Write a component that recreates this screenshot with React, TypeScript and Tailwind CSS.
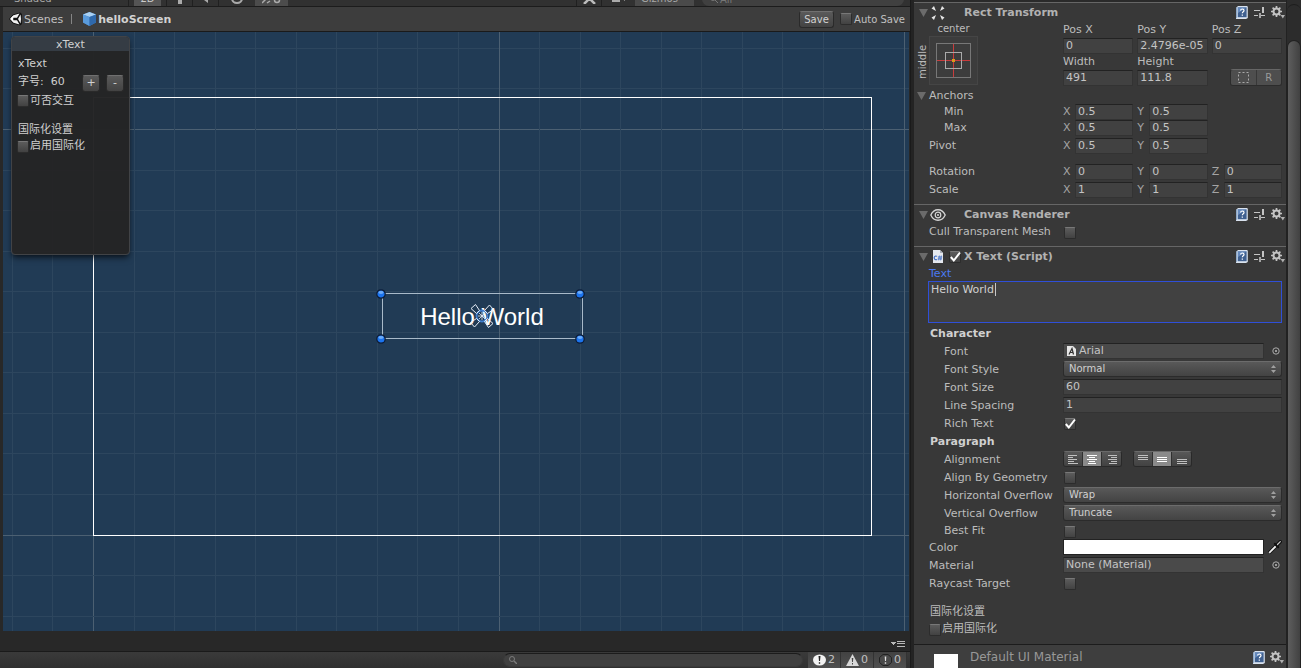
import React, { useId } from "react";
import clsx from "clsx";

const btn =
  "border border-[#2a2a2a] border-t-[#707070] bg-linear-to-b from-[#5a5a5a] to-[#434343] text-[#d2d2d2]";

/* ---------- icons ---------- */

function UnityIcon() {
  return (
    <svg width="14" height="14" viewBox="0 0 14 14">
      <path d="M0 7 4 2.5 11 .5 13 2 12.5 7l.5 5-2 1.5-7-2z" fill="#111" />
      <path d="M1 7 4.5 3.2 10.5 1.6 8 5.8H3.2zM3.2 8.2H8l2.5 4.2-6-1.6zM11.6 2.4 12 7l-.4 4.6L9 7z" fill="#f2f2f2" />
      <path d="M1 7 4.6 3.2 4.2 7l.4 3.8z" fill="#fff" />
    </svg>
  );
}

function CubeIcon() {
  return (
    <svg width="13" height="14" viewBox="0 0 13 14">
      <path d="M6.5 0 13 2.5v8L6.5 14 0 10.5v-8z" fill="#3f7fc4" />
      <path d="M6.5 0 13 2.5 6.5 5 0 2.5z" fill="#a9d0f2" />
      <path d="M0 2.5 6.5 5v9L0 10.5z" fill="#5a9bdc" />
      <path d="M13 2.5 6.5 5v9l6.5-3.5z" fill="#2f69ac" />
    </svg>
  );
}

function BookIcon() {
  return (
    <svg width="13" height="13" viewBox="0 0 13 13">
      <path d="M1 2 3 0h9l.8.8V12L11 13H1z" fill="#d9e2ee" />
      <path d="M1 2 2.6.6V11L1 12.6z" fill="#8fa9c8" />
      <path d="M3 1.4h8.6v9.8H3z" fill="#3f6090" />
      <path d="M3 1.4h8.6L3 7z" fill="#6489bd" />
      <path d="M5.6 4.6c0-2.2 3.6-2 3.4 0-.1 1.2-1.6 1.2-1.7 2.7M7.3 8.6v1.2" stroke="#fff" strokeWidth="1.2" fill="none" />
    </svg>
  );
}

function PresetIcon() {
  return (
    <svg width="11" height="12" viewBox="0 0 11 12" shapeRendering="crispEdges" fill="#c4c4c4">
      <path d="M0 3h6v1H0zM0 8h4v1H0zM7 8h4v1H7z" />
      <path d="M8 0h2v6H8z" />
      <path d="M5 6h2v5H5z" fill="#a4a4a4" />
    </svg>
  );
}

function GearIcon() {
  return (
    <svg width="14" height="13" viewBox="0 0 14 13">
      <circle cx="5.5" cy="5.5" r="3" fill="none" stroke="#c4c4c4" strokeWidth="2" />
      <path
        d="M5.5 0v2M5.5 9v2M0 5.5h2M9 5.5h2M1.6 1.6 3 3M8 8l1.4 1.4M1.6 9.4 3 8M8 3l1.4-1.4"
        stroke="#c4c4c4"
        strokeWidth="1.7"
      />
      <path d="M9.6 9H14l-2.2 3.4z" fill="#b0b0b0" />
    </svg>
  );
}

function Foldout() {
  return (
    <svg width="9" height="8" viewBox="0 0 9 8">
      <path d="M0 0h9L4.5 8z" fill="#6b6b6b" />
    </svg>
  );
}

function RectTransformIcon() {
  return (
    <svg width="16" height="14" viewBox="0 0 16 14" fill="#e6e6e6">
      <path d="M1.5 2.5 4 0 6 5zM14.500 2.5 12 0 10 5zM1.5 11.5 4 14 6 9zM14.500 11.5 12 14 10 9z" />
    </svg>
  );
}

function EyeIcon() {
  return (
    <svg width="16" height="12" viewBox="0 0 16 12" fill="none" stroke="#d6d6d6">
      <path d="M.8 6C4-1 12-1 15.2 6 12 13 4 13 .8 6z" strokeWidth="1.3" />
      <circle cx="8" cy="6" r="2.8" strokeWidth="1.2" />
      <circle cx="8" cy="6" r="1" fill="#d6d6d6" stroke="none" />
    </svg>
  );
}

function ScriptIcon() {
  return (
    <svg width="10" height="13" viewBox="0 0 10 13">
      <path d="M0 0h7l3 3v10H0z" fill="#e4e8ee" />
      <path d="M7 0v3h3z" fill="#a9afba" />
      <path d="M4 6.4a1.700 1.900 0 1 0 0 2.900" stroke="#3a68c0" strokeWidth="1.1" fill="none" />
      <path d="M4.900 7h4.300M4.700 8.900h4.300M6.400 5.600 5.700 10.300M8.300 5.600 7.600 10.300" stroke="#3a68c0" strokeWidth=".8" fill="none" />
    </svg>
  );
}

function PickerDot() {
  return (
    <svg width="8" height="8" viewBox="0 0 8 8">
      <circle cx="4" cy="4" r="3.2" fill="none" stroke="#aaa" />
      <circle cx="4" cy="4" r="1" fill="#bbb" />
    </svg>
  );
}

function Dropper() {
  return (
    <svg width="14" height="14" viewBox="0 0 14 14">
      <path d="M1 13 8.500 5.500" stroke="#111" strokeWidth="3.400" />
      <path d="M1.200 12.800 8.500 5.500" stroke="#f0f0f0" strokeWidth="1.800" />
      <path d="M6.800 3.800 10.200 7.200" stroke="#111" strokeWidth="2" strokeLinecap="round" />
      <path d="M9 5 12.200 1.800" stroke="#111" strokeWidth="3.600" strokeLinecap="round" />
      <path d="M9.500 4.500 12.300 1.700" stroke="#c8c8c8" strokeWidth="1.200" strokeLinecap="round" />
    </svg>
  );
}

type Lines = [number, number, number][];
const alignIcons: Record<string, Lines> = {
  Left: [[0, 9, 1], [0, 5, 3], [0, 9, 5], [0, 6, 7], [0, 10, 9]],
  Center: [[0, 10, 1], [2, 6, 3], [0, 10, 5], [2, 6, 7], [1, 8, 9]],
  Right: [[1, 9, 1], [4, 6, 3], [1, 9, 5], [4, 6, 7], [2, 8, 9]],
  Top: [[0, 10, 1], [0, 10, 3], [0, 10, 5]],
  Middle: [[0, 10, 3], [0, 10, 5], [0, 10, 7]],
  Bottom: [[0, 10, 5], [0, 10, 7], [0, 10, 9]],
};

function AlignGroup({ names, active }: { names: string[]; active: string }) {
  return (
    <div className="flex h-4 overflow-hidden rounded-[3px] border border-[#292929] border-t-[#6a6a6a]">
      {names.map((n) => (
        <button
          key={n}
          aria-label={n}
          className={clsx(
            "flex w-[19px] items-center justify-center border-r border-[#303030] last:border-r-0",
            n === active ? "bg-[#8a8a8a] text-white" : "bg-linear-to-b from-[#585858] to-[#424242] text-[#c0c0c0]",
          )}
        >
          <svg width="10" height="10" viewBox="0 0 10 10" fill="currentColor" shapeRendering="crispEdges">
            {alignIcons[n].map(([x, w, y]) => (
              <rect key={y} x={x} y={y} width={w} height="1" />
            ))}
          </svg>
        </button>
      ))}
    </div>
  );
}

/* ---------- controls ---------- */

function Check({ id, label, checked }: { id?: string; label?: string; checked?: boolean }) {
  return (
    <span className="relative flex size-3 shrink-0">
      <input
        id={id}
        type="checkbox"
        aria-label={label}
        defaultChecked={checked}
        className="peer size-3 appearance-none rounded-[2px] border border-[#2c2c2c] border-t-[#787878] bg-linear-to-b from-[#5c5c5c] to-[#424242]"
      />
      <svg className="pointer-events-none absolute inset-0 hidden peer-checked:block" width="12" height="12" viewBox="0 0 12 12">
        <path d="M1.8 6 4.8 9.5 11 1.5" fill="none" stroke="#fff" strokeWidth="2" />
      </svg>
    </span>
  );
}

function Field({ id, label, value }: { id?: string; label?: string; value: string }) {
  return (
    <input
      id={id}
      aria-label={label}
      defaultValue={value}
      className="block h-4 w-full min-w-0 border border-[#333] border-t-[#222] bg-[#414141] px-[2px] text-[11px] text-[#c4c4c4] outline-none"
    />
  );
}

function Row({
  label,
  indent,
  className,
  children,
}: {
  label: string;
  indent?: boolean;
  className?: string;
  children: (id: string) => React.ReactNode;
}) {
  const id = useId();
  return (
    <div className={clsx("flex items-center", className ?? "h-[18px]")}>
      <label htmlFor={id} className={clsx("w-[134px] shrink-0 whitespace-nowrap", indent && "pl-[15px]")}>
        {label}
      </label>
      <div className="flex h-4 min-w-0 flex-1 items-center self-start">{children(id)}</div>
    </div>
  );
}

function CheckRow({ label, indent, className, checked }: { label: string; indent?: boolean; className?: string; checked?: boolean }) {
  return (
    <Row label={label} indent={indent} className={className}>
      {(id) => (
        <span className="mt-[2px] ml-px">
          <Check id={id} checked={checked} />
        </span>
      )}
    </Row>
  );
}

function AxisRow({ label, indent, className, values }: { label: string; indent?: boolean; className: string; values: string[] }) {
  return (
    <div className={clsx("flex items-center", className)}>
      <span className={clsx("w-[134px] shrink-0", indent && "pl-[15px]")}>{label}</span>
      <div className="grid flex-1 grid-cols-3 gap-1">
        {values.map((v, i) => (
          <label key={i} className="flex items-center">
            <span className="w-3 shrink-0 text-[#a4a4a4]">{"XYZ"[i]}</span>
            <Field label={`${label} ${"XYZ"[i]}`} value={v} />
          </label>
        ))}
      </div>
    </div>
  );
}

function Dropdown({ id, value, options }: { id: string; value: string; options: string[] }) {
  return (
    <div className="relative flex-1">
      <select
        id={id}
        defaultValue={value}
        className="block h-4 w-full appearance-none rounded-[3px] border border-[#2b2b2b] border-t-[#6c6c6c] bg-linear-to-b from-[#595959] to-[#434343] px-[5px] text-[10px] leading-3 text-[#d0d0d0]"
      >
        {options.map((o) => (
          <option key={o}>{o}</option>
        ))}
      </select>
      <svg className="pointer-events-none absolute top-1 right-[6px]" width="5" height="8" viewBox="0 0 5 8" fill="#a0a0a0">
        <path d="M0 3 2.5 0 5 3zM0 5h5L2.5 8z" />
      </svg>
    </div>
  );
}

function Header({ icon, title, check }: { icon: React.ReactNode; title: string; check?: boolean }) {
  return (
    <div className="flex h-5 items-center border-t border-[#666] pl-[5px]">
      <Foldout />
      <span className="flex w-5 justify-center">{icon}</span>
      <span className="flex w-4 pl-px">{check && <Check label={`Enable ${title}`} checked />}</span>
      <h2 className="flex-1 pt-[2px] text-[11px] font-bold text-[#b2b2b2]">{title}</h2>
      <div className="flex items-center gap-[6px] pr-px">
        <button aria-label="Help"><BookIcon /></button>
        <button aria-label="Presets"><PresetIcon /></button>
        <button aria-label="Settings"><GearIcon /></button>
      </div>
    </div>
  );
}

/* ---------- scene ---------- */

const steps = Array.from({ length: 60 }, (_, i) => i - 2);

function SceneDrawing() {
  return (
    <svg className="absolute inset-0 size-full" shapeRendering="crispEdges">
      {steps.map((k) => {
        const strong = k % 10 === 0;
        const x = 90.5 + Math.round(k * 40.55);
        const y = 97.5 + Math.round(k * 40.55);
        const color = strong ? "#4c6072" : "#2d465e";
        return (
          <g key={k} stroke={color}>
            <line x1={x} x2={x} y1="0" y2="3000" />
            <line x1="0" x2="3000" y1={y} y2={y} />
          </g>
        );
      })}
      <rect x="90.5" y="65.5" width="778" height="438" fill="none" stroke="#fff" />
      <rect x="379.5" y="261.5" width="200" height="45" fill="none" stroke="#a9bac9" />
    </svg>
  );
}

function SelectionGizmo() {
  return (
    <svg className="absolute top-[256px] left-[372px]" width="214" height="56" viewBox="0 0 214 56">
      <g transform="translate(107 28)" fill="none" stroke="#e6eef8">
        <circle r="5.5" stroke="#3f7dcc" strokeWidth="1.8" />
        {[0, 90, 180, 270].map((a) => (
          <path key={a} transform={`rotate(${a})`} d="M2.500 5.500 6.500 11.500 11 7.500 5.500 2.500z" strokeWidth="1" />
        ))}
        <path d="M-4 0H4M0-4V4M-3-3l6 6M3-3l-6 6" strokeWidth=".8" />
      </g>
      {[[6, 6], [205, 6], [6, 51], [205, 51]].map(([x, y]) => (
        <g key={`${x}-${y}`}>
          <circle cx={x} cy={y} r="4.2" fill="#1c74ee" stroke="#0d1b33" strokeWidth="1.2" />
          <ellipse cx={x} cy={y - 1.5} rx="2.6" ry="1.4" fill="#6aaaf8" />
        </g>
      ))}
    </svg>
  );
}

function XTextPanel() {
  return (
    <section className="absolute top-1 left-2 h-[219px] w-[119px] rounded-[4px] border border-[#414346] bg-[#252526]/98 text-[#d0d0d0] shadow-md shadow-black/50">
      <h3 className="h-[14px] rounded-t-[3px] bg-[#353c44] text-center leading-[15px]">xText</h3>
      <div className="px-[6px] pt-[4px]">
        <p className="h-[18px] leading-[18px]">xText</p>
        <div className="flex h-[17px] items-center">
          <span className="flex-1 leading-4">字号:&nbsp; 60</span>
          <button className={clsx(btn, "mt-[3px] h-[17px] w-[18px] rounded-[3px] leading-[14px]")}>+</button>
          <button className={clsx(btn, "mt-[3px] ml-[6px] -mr-px h-[17px] w-[18px] rounded-[3px] leading-[14px]")}>-</button>
        </div>
        <label className="-ml-px flex h-[22px] items-center gap-px"><Check />可否交互</label>
        <p className="mt-[9px] h-[17px] leading-[17px]">国际化设置</p>
        <label className="-ml-px flex h-[17px] items-center gap-px"><Check />启用国际化</label>
      </div>
    </section>
  );
}

function TopStrip() {
  return (
    <div className="flex h-[7px] shrink-0 items-end overflow-hidden border-b border-[#1c1c1c] bg-[#313131] pl-[3px] text-[10px] text-[#a8a8a8]">
      <div className="flex h-4 w-[126px] items-center border-r border-[#202020] pl-[11px]">Shaded</div>
      <div className="ml-[5px] flex h-4 w-[27px] items-center justify-center bg-[#555] text-[#ccc]">2D</div>
      <div className="ml-[5px] flex h-4 w-[27px] items-center justify-center border-x border-[#202020]">
        <svg width="8" height="12" viewBox="0 0 8 12" fill="#aaa"><circle cx="4" cy="4" r="4" /><path d="M2 8h4v4H2z" /></svg>
      </div>
      <div className="flex h-4 w-[26px] items-center justify-center border-r border-[#202020]">
        <svg width="10" height="10" viewBox="0 0 10 10" fill="#aaa"><path d="M0 3h3l4-3v10L3 7H0z" /></svg>
      </div>
      <div className="flex h-4 w-[36px] items-center justify-center">
        <svg width="14" height="11" viewBox="0 0 14 11" fill="none" stroke="#aaa" strokeWidth="2"><ellipse cx="7" cy="5.5" rx="5" ry="4.5" /></svg>
      </div>
      <div className="flex h-4 w-[33px] items-center justify-center bg-[#4c4c4c]">
        <svg width="20" height="11" viewBox="0 0 20 11" fill="none" stroke="#aaa" strokeWidth="1.5"><path d="M0 10 9 1M5 10l3-2" /><circle cx="15" cy="7" r="2.5" /></svg>
      </div>
      <div className="flex-1" />
      <div className="flex h-4 w-[26px] items-center justify-center border-x border-[#202020]">
        <svg width="13" height="12" viewBox="0 0 13 12" stroke="#bbb" strokeWidth="2.5"><path d="M1 1l11 11M12 1 1 12" /></svg>
      </div>
      <div className="flex h-4 w-[33px] items-center justify-center">
        <svg width="13" height="8" viewBox="0 0 13 8" fill="#aaa"><path d="M0 0h8v8H0zM9 4l4-3v6z" /></svg>
      </div>
      <div className="flex h-4 w-[59px] items-center bg-[#4a4a4a] pl-[6px]">Gizmos</div>
      <div className="mr-[6px] ml-2 flex h-[14px] w-[202px] items-center gap-px self-end rounded-full bg-[#404040] pl-2 text-[#777]">
        <svg width="9" height="8" viewBox="0 0 9 8" fill="none" stroke="#777"><circle cx="3" cy="3" r="2.5" /><path d="m5 5 3 3" /></svg>
        All
      </div>
    </div>
  );
}

function StatusBadge({ count, children }: { count: number; children: React.ReactNode }) {
  return (
    <button className="flex h-4 w-[33px] items-center gap-[2px] border-r border-[#333] bg-linear-to-b from-[#424242] to-[#505050] pl-[5px] text-[11px] text-[#c0c0c0]">
      {children}
      {count}
    </button>
  );
}

function SceneView() {
  return (
    <main className="flex min-w-0 flex-1 flex-col border-r border-[#1a1a1a] bg-[#282828]">
      <TopStrip />
      <div className="ml-[3px] flex h-[25px] shrink-0 items-center border-b border-[#1a1a1a] bg-[#3d3d3d] pl-[6px] text-[#c0c0c0]">
        <UnityIcon />
        <a href="#scenes" className="ml-px pt-[2px]">Scenes</a>
        <span className="ml-[8px] h-[10px] w-px bg-[#858585]" />
        <span className="ml-[11px]"><CubeIcon /></span>
        <b className="ml-[2px] flex-1 pt-[2px] text-[#d2d2d2]">helloScreen</b>
        <button className={clsx(btn, "h-[17px] w-[35px] rounded-[3px] text-[10px]")}>Save</button>
        <label className="mr-[5px] ml-[6px] flex items-center gap-[2px] text-[10px]"><Check />Auto Save</label>
      </div>
      <div className="relative mr-px ml-[3px] min-h-0 flex-1 overflow-hidden bg-[#213b55]">
        <SceneDrawing />
        <div className="absolute top-[263px] left-[379px] flex h-[44px] w-[200px] items-center justify-center font-['Liberation_Sans',sans-serif] text-2xl text-white">
          Hello World
        </div>
        <SelectionGizmo />
        <XTextPanel />
      </div>
      <div className="flex h-[21px] shrink-0 items-center justify-end border-b border-[#1a1a1a] pt-[5px] pr-[5px]">
        <button aria-label="Panel menu">
          <svg width="14" height="6" viewBox="0 0 14 6" fill="#b8b8b8" shapeRendering="crispEdges"><path d="M0 1h5L2.5 4zM6 0h8v1H6zM6 2h8v1H6zM6 5h8v1H6z" /></svg>
        </button>
      </div>
      <div className="flex h-4 shrink-0 items-center bg-linear-to-b from-[#3a3a3a] to-[#303030] pr-[3px]">
        <div className="flex-1" />
        <label className="mr-[5px] flex h-[14px] w-[300px] items-center rounded-full border border-[#3a3a3a] border-t-[#1c1c1c] bg-[#404040] pl-[5px]">
          <svg width="8" height="8" viewBox="0 0 8 8" fill="none" stroke="#7c7c7c"><circle cx="3" cy="3" r="2.5" /><path d="m5 5 3 3" strokeWidth="1.4" /></svg>
          <input aria-label="Search console" className="min-w-0 flex-1 bg-transparent outline-none" />
        </label>
        <StatusBadge count={2}>
          <svg width="13" height="12" viewBox="0 0 13 12"><ellipse cx="6.5" cy="6" rx="6.5" ry="5.5" fill="#f2f2f2" /><path d="M5.5 2h2L7 7H6zM5.8 8.2h1.4v1.5H5.8z" fill="#222" /></svg>
        </StatusBadge>
        <StatusBadge count={0}>
          <svg width="13" height="12" viewBox="0 0 13 12"><path d="M6.5 0 13 12H0z" fill="#d8d8d8" /><path d="M5.7 4h1.6l-.4 4h-.8zM6 9h1v1.4H6z" fill="#444" /></svg>
        </StatusBadge>
        <StatusBadge count={0}>
          <svg width="13" height="12" viewBox="0 0 13 12"><path d="M4 .5h5l3.5 3v5l-3.5 3H4l-3.5-3v-5z" fill="#4a4a4a" stroke="#222" /><path d="M5.7 2.500h1.6L7 7H6zM5.8 8.300h1.4v1.4H5.8z" fill="#e0e0e0" /></svg>
        </StatusBadge>
      </div>
    </main>
  );
}

/* ---------- inspector ---------- */

function RectTransform() {
  return (
    <section className="pb-[6px]">
      <Header icon={<RectTransformIcon />} title="Rect Transform" />
      <div className="flex h-16 pr-[4px]">
        <div className="flex w-[149px] shrink-0 pl-[3px]">
          <span className="mt-4 flex h-[48px] w-[12px] rotate-180 items-center justify-center text-[10px] leading-3 [writing-mode:vertical-rl]">middle</span>
          <div className="w-[49px]">
            <p className="h-[14px] text-center text-[10px] leading-[14px]">center</p>
            <button aria-label="Anchor presets" className="flex size-[49px] items-center justify-center border border-[#454545] bg-[#3c3c3c]">
              <svg width="35" height="35" viewBox="0 0 35 35" fill="none" shapeRendering="crispEdges">
                <rect x=".5" y=".5" width="34" height="34" stroke="#777" />
                <path d="M17.5 1v33M1 17.5h33" stroke="#c83c3c" />
                <rect x="9.5" y="9.5" width="16" height="16" stroke="#aaa" />
                <rect x="16" y="16" width="3" height="3" fill="#d79b1c" />
              </svg>
            </button>
          </div>
        </div>
        <div className="grid flex-1 grid-cols-3 gap-x-1">
          <label className="leading-4">Pos X<Field value="0" /></label>
          <label className="leading-4">Pos Y<Field value="2.4796e-05" /></label>
          <label className="leading-4">Pos Z<Field value="0" /></label>
          <label className="leading-4">Width<Field value="491" /></label>
          <label className="leading-4">Height<Field value="111.8" /></label>
          <div className="flex items-end justify-end">
            <div className="flex h-[17px] w-[52px] overflow-hidden rounded-[3px] border border-[#2c2c2c] border-t-[#666] text-[10px] text-[#9a9a9a]">
              <button aria-label="Blueprint mode" className="flex flex-1 items-center justify-center border-r border-[#383838] bg-[#4e4e4e]">
                <svg width="11" height="11" viewBox="0 0 11 11"><rect x=".5" y=".5" width="10" height="10" fill="none" stroke="#aaa" strokeDasharray="2 2" /></svg>
              </button>
              <button className="flex-1 bg-[#4e4e4e]">R</button>
            </div>
          </div>
        </div>
      </div>
      <div className="pr-[4px] pl-[15px]">
        <div className="relative mt-[2px] h-4 leading-4">
          <span className="absolute top-1 -left-3"><Foldout /></span>
          Anchors
        </div>
        <AxisRow label="Min" indent className="h-4" values={["0.5", "0.5"]} />
        <AxisRow label="Max" indent className="h-4" values={["0.5", "0.5"]} />
        <AxisRow label="Pivot" className="mt-[2px] h-4" values={["0.5", "0.5"]} />
        <AxisRow label="Rotation" className="mt-[10px] h-4" values={["0", "0", "0"]} />
        <AxisRow label="Scale" className="mt-[2px] h-4" values={["1", "1", "1"]} />
      </div>
    </section>
  );
}

function ObjectField({ id, value, icon }: { id: string; value: string; icon?: boolean }) {
  return (
    <>
      <div className="flex h-4 flex-1 items-center border border-[#333] border-t-[#222] bg-[#4a4a4a] px-[2px]">
        {icon && (
          <svg className="mr-[3px] ml-px" width="9" height="10" viewBox="0 0 9 10"><path d="M0 0h6l3 3v7H0z" fill="#e6e6e6" /><path d="M2 8.5 5 2.5l1.5 6M3 6.5h3" fill="none" stroke="#333" strokeWidth="1.2" /></svg>
        )}
        <input id={id} defaultValue={value} className="min-w-0 flex-1 bg-transparent text-[11px] text-[#c4c4c4] outline-none" />
      </div>
      <button aria-label={`Pick ${value}`} className="flex w-[18px] justify-center pl-[5px]"><PickerDot /></button>
    </>
  );
}

function Inspector() {
  return (
    <aside className="flex w-[387px] shrink-0 bg-[#383838]">
      <div className="min-w-0 flex-1 overflow-hidden border-r border-[#222]">
        <div className="h-[2px] bg-[#2a2a2a]" />
        <RectTransform />
        <section className="pb-[6px]">
          <Header icon={<EyeIcon />} title="Canvas Renderer" />
          <div className="pl-[15px]">
            <CheckRow label="Cull Transparent Mesh" className="h-4" />
          </div>
        </section>
        <section>
          <Header icon={<ScriptIcon />} title="X Text (Script)" check />
          <div className="pr-[4px] pl-[15px]">
            <label htmlFor="text-value" className="block h-[15px] leading-4 text-[#4a78f0]">Text</label>
            <div className="relative -ml-px">
              <textarea
                id="text-value"
                defaultValue="Hello World"
                className="block h-[42px] w-full resize-none border border-[#2f4fd8] bg-[#414141] px-[2px] text-[11px] leading-4 text-[#d0d0d0] outline-none"
              />
              <span className="pointer-events-none absolute top-[2px] left-[67px] h-[13px] w-px bg-[#c8c8c8]" />
            </div>
            <h3 className="mt-[2px] h-[18px] pl-px leading-[18px] font-bold text-[#d0d0d0]">Character</h3>
            <Row indent label="Font">{(id) => <ObjectField id={id} value="Arial" icon />}</Row>
            <Row indent label="Font Style">{(id) => <Dropdown id={id} value="Normal" options={["Normal", "Bold", "Italic"]} />}</Row>
            <Row indent label="Font Size">{(id) => <Field id={id} value="60" />}</Row>
            <Row indent label="Line Spacing">{(id) => <Field id={id} value="1" />}</Row>
            <CheckRow indent label="Rich Text" checked />
            <h3 className="h-[18px] pl-px leading-[18px] font-bold text-[#d0d0d0]">Paragraph</h3>
            <div className="flex h-[18px] items-start">
              <span className="w-[134px] shrink-0 pl-[15px] leading-[18px]">Alignment</span>
              <AlignGroup names={["Left", "Center", "Right"]} active="Center" />
              <span className="w-[11px]" />
              <AlignGroup names={["Top", "Middle", "Bottom"]} active="Middle" />
            </div>
            <CheckRow indent label="Align By Geometry" />
            <Row indent label="Horizontal Overflow">{(id) => <Dropdown id={id} value="Wrap" options={["Wrap", "Overflow"]} />}</Row>
            <Row indent label="Vertical Overflow">{(id) => <Dropdown id={id} value="Truncate" options={["Truncate", "Overflow"]} />}</Row>
            <CheckRow indent label="Best Fit" className="h-4" />
            <Row label="Color">
              {(id) => (
                <>
                  <button id={id} className="h-4 flex-1 border border-[#222] bg-white" />
                  <button aria-label="Pick color" className="flex w-[18px] justify-center pl-1"><Dropper /></button>
                </>
              )}
            </Row>
            <Row label="Material">{(id) => <ObjectField id={id} value="None (Material)" />}</Row>
            <CheckRow label="Raycast Target" />
            <p className="mt-[10px] h-[18px] pl-px leading-[18px]">国际化设置</p>
            <label className="flex h-[17px] items-center gap-px"><Check />启用国际化</label>
          </div>
        </section>
        <footer className="mt-[6px] flex h-[26px] border-t border-[#1c1c1c] bg-[#3e3e3e] pr-[2px] pl-[20px]">
          <span className="mt-[9px] w-6 bg-white" />
          <span className="ml-3 flex-1 text-xs leading-[25px] text-[#989898]">Default UI Material</span>
          <div className="flex items-center gap-[5px]">
            <button aria-label="Help"><BookIcon /></button>
            <button aria-label="Settings"><GearIcon /></button>
          </div>
        </footer>
      </div>
      <div className="flex w-[14px] shrink-0 flex-col bg-[#2c2c2c] pt-1">
        <div className="h-9 rounded-t-full border-t border-[#1e1e1e]" />
        <div className="flex-1 rounded-t-full border border-b-0 border-[#222] bg-linear-to-r from-[#5e5e5e] to-[#414141]" />
      </div>
    </aside>
  );
}

export default function App() {
  return (
    <div className="flex h-screen gap-[3px] overflow-hidden bg-[#232323] font-['DejaVu_Sans','Noto_Sans_CJK_SC',sans-serif] text-[11px] text-[#bcbcbc]">
      <SceneView />
      <Inspector />
    </div>
  );
}
